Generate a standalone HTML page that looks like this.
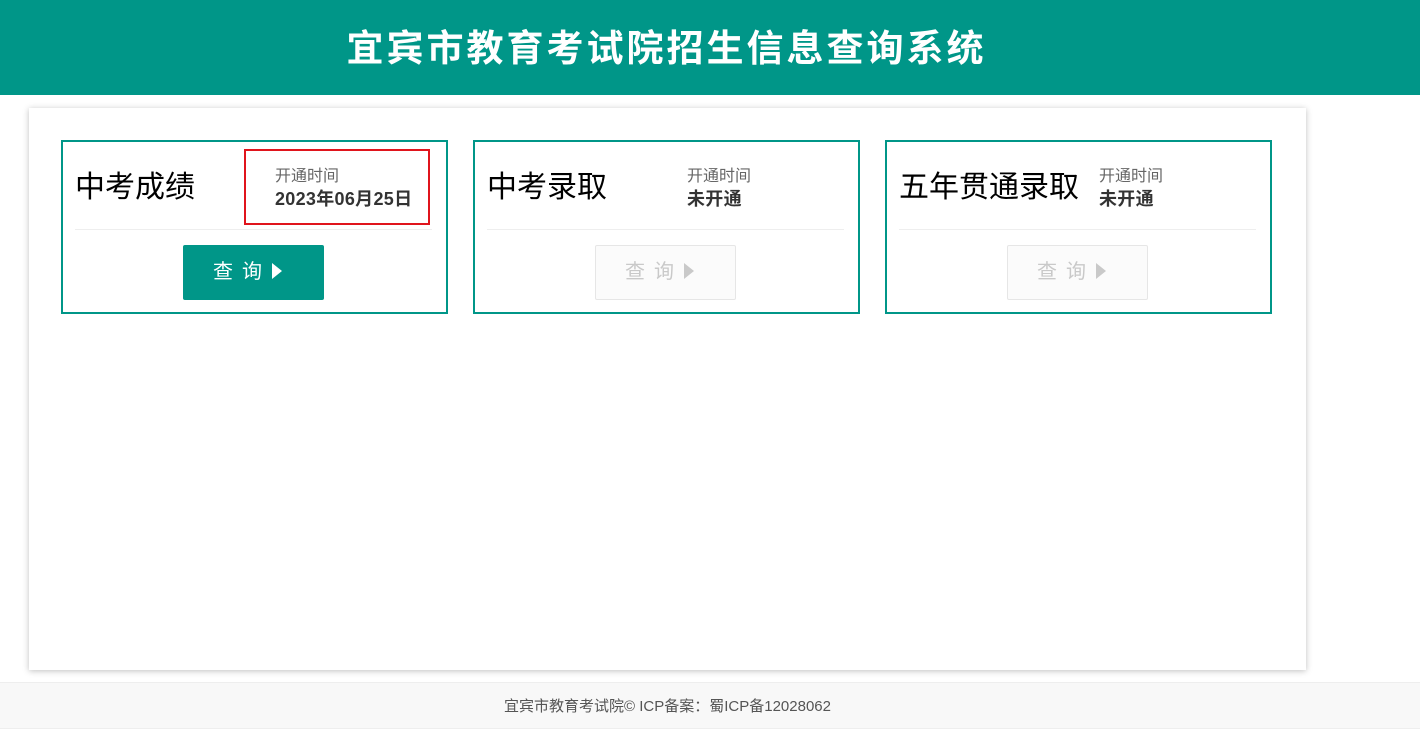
<!DOCTYPE html>
<html><head><meta charset="utf-8"><style>
*{margin:0;padding:0;box-sizing:border-box}
body{width:1420px;height:745px;background:#fff;font-family:"Liberation Sans","Noto Sans CJK SC",sans-serif;position:relative;overflow:hidden}
.hd{position:absolute;left:0;top:0;width:1420px;height:95px;background:#009688}
.hd h1{position:absolute;left:0;width:1333px;top:25px;text-align:center;color:#fff;font-size:37px;font-weight:bold;letter-spacing:3px;line-height:48px}
.panel{position:absolute;left:29px;top:108px;width:1277px;height:562px;background:#fff;box-shadow:0 1px 6px rgba(0,0,0,.25)}
.card{position:absolute;top:140px;width:387px;height:174px;border:2px solid #009688}
.t{position:absolute;left:12px;top:26px;font-size:30px;line-height:40px;color:#000}
.info{position:absolute;left:212px;top:24px;font-size:16px;line-height:22px;color:#666}
.info b{display:block;color:#333;font-size:18px;letter-spacing:0.3px}
.red{position:absolute;left:181px;top:7px;width:186px;height:76px;border:2px solid #e0141c}
.line{position:absolute;left:12px;top:87px;width:357px;height:1px;background:#eee}
.btn{position:absolute;left:120px;top:103px;width:141px;height:55px;background:#009688;color:#fff;font-size:20px;line-height:55px;text-align:center;border-radius:2px;letter-spacing:9px;padding-right:12px}
.btn.dis{background:#fbfbfb;border:1px solid #e6e6e6;color:#c9c9c9;line-height:53px}
.tri{display:inline-block;width:0;height:0;border-left:10px solid currentColor;border-top:8px solid transparent;border-bottom:8px solid transparent;vertical-align:-1px;margin-left:1px}
.ft{position:absolute;left:0;top:682px;width:1420px;height:47px;background:#f8f8f8;border-top:1px solid #eee;border-bottom:1px solid #eee;text-align:center;font-size:15px;line-height:48px;color:#555;padding-right:85px}
</style></head><body>
<div class="hd"><h1>宜宾市教育考试院招生信息查询系统</h1></div>
<div class="panel"></div>
<div class="card" style="left:61px"><div class="t">中考成绩</div><div class="red"></div><div class="info">开通时间<b>2023年06月25日</b></div><div class="line"></div><div class="btn">查询<span class="tri"></span></div></div>
<div class="card" style="left:473px"><div class="t">中考录取</div><div class="info">开通时间<b>未开通</b></div><div class="line"></div><div class="btn dis">查询<span class="tri"></span></div></div>
<div class="card" style="left:885px"><div class="t">五年贯通录取</div><div class="info">开通时间<b>未开通</b></div><div class="line"></div><div class="btn dis">查询<span class="tri"></span></div></div>
<div class="ft">宜宾市教育考试院© ICP备案：蜀ICP备12028062</div>
</body></html>
